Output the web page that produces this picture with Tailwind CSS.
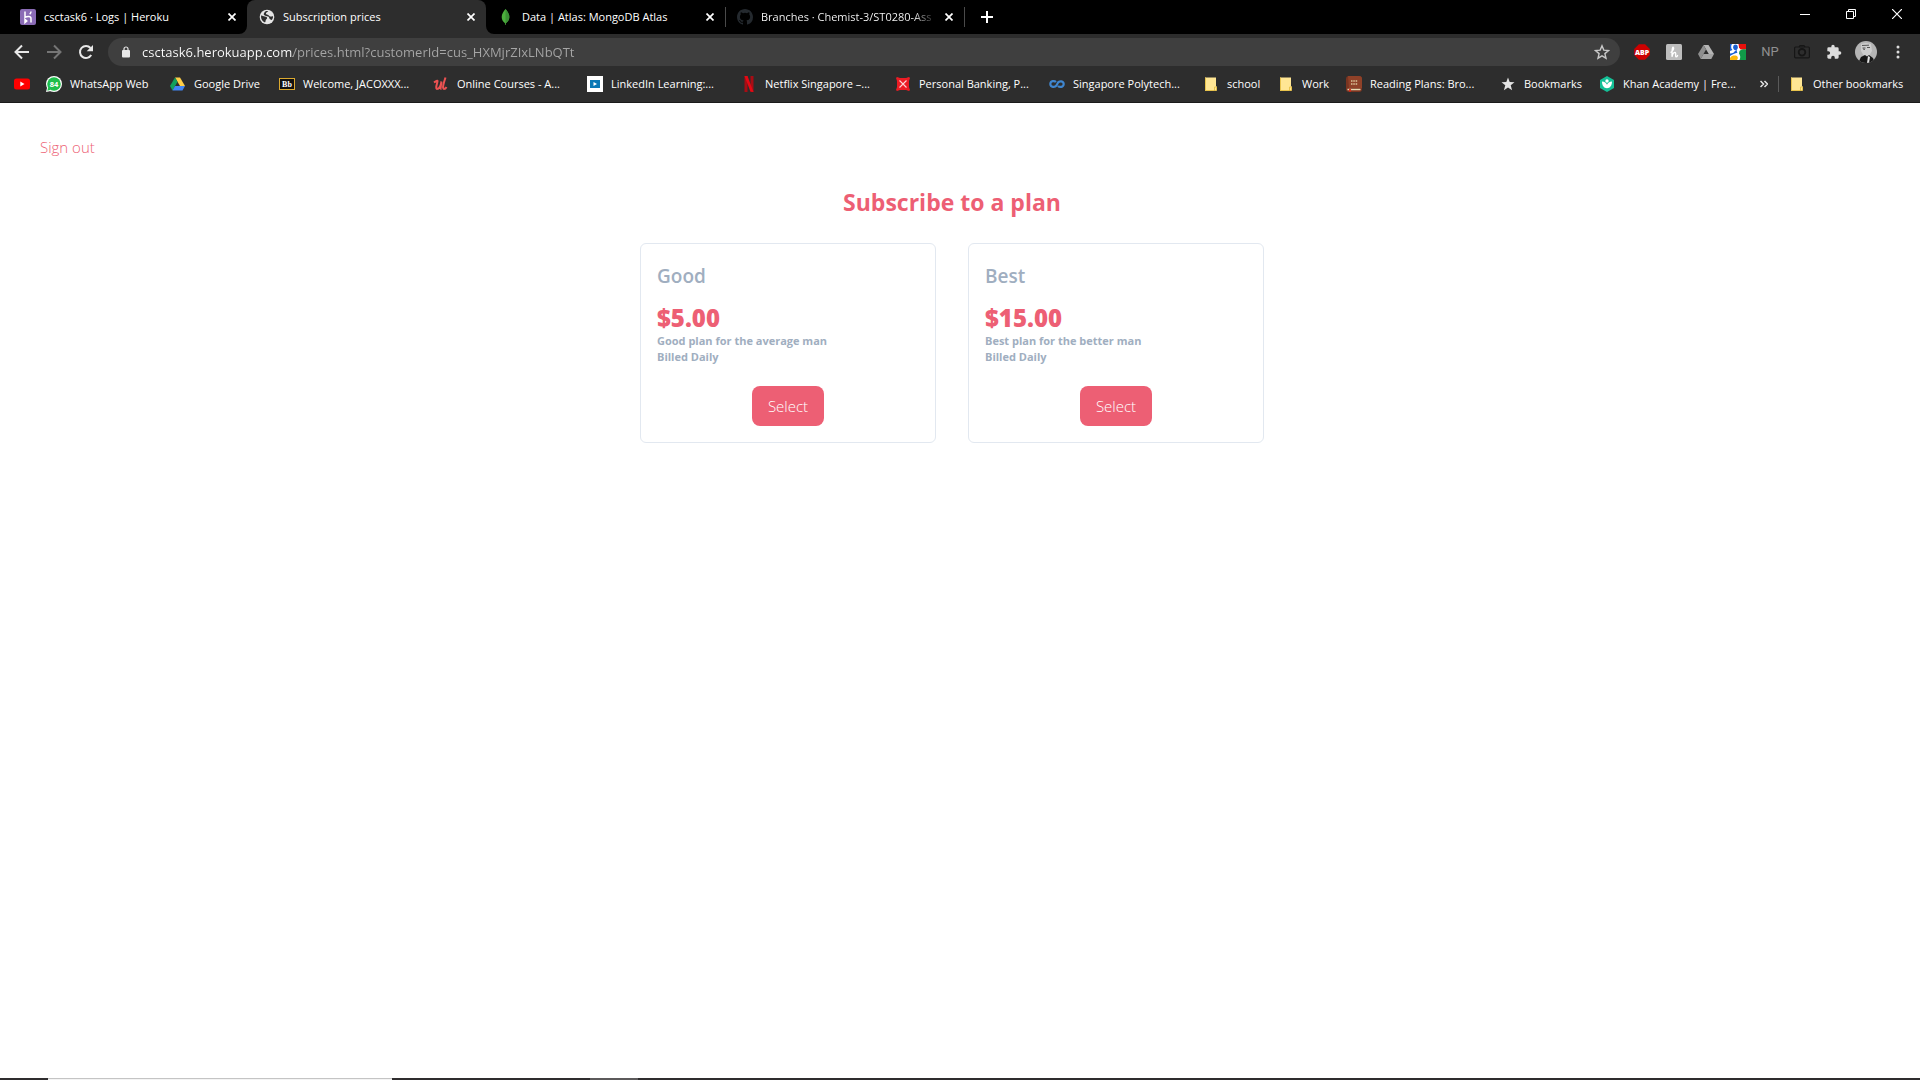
<!DOCTYPE html>
<html lang="en">
<head>
<meta charset="utf-8">
<title>Subscription prices</title>
<script src="https://cdn.jsdelivr.net/npm/@tailwindcss/browser@4"></script>
</head>
<body class="flex min-h-screen flex-col bg-white font-['Open_Sans','Noto_Sans',sans-serif]">

<header class="bg-[#2d2d2d] text-[11px] leading-4 text-white">
  <!-- Tab strip -->
  <div class="flex h-[34px] bg-black pl-2">
    <div class="flex w-[239px] items-center gap-2 px-3">
      <svg class="size-4 shrink-0" viewBox="0 0 16 16"><rect width="16" height="16" rx="2" fill="#8a6bb5"/><path d="M5 2.500v5.800c2-1 6-1.500 6 1.200v4M11 2.500c0 1-.5 2-1.300 2.700M5 10.500v3.200l1.800-1.600z" fill="none" stroke="#fff" stroke-width="1.500"/></svg>
      <span class="grow whitespace-nowrap">csctask6 · Logs | Heroku</span>
      <button aria-label="Close tab" class="-mr-[5px] size-4 p-1"><svg class="size-2" viewBox="0 0 8 8"><path d="M.5.5l7 7M7.500.5l-7 7" stroke="#fff" stroke-width="1.700"/></svg></button>
    </div>
    <div class="relative flex w-[239px] items-center gap-2 rounded-t-lg bg-[#2d2d2d] px-3">
      <svg class="absolute bottom-0 -left-2 size-2" viewBox="0 0 8 8"><path d="M8 0v8H0a8 8 0 0 0 8-8z" fill="#2d2d2d"/></svg>
      <svg class="absolute -right-2 bottom-0 size-2" viewBox="0 0 8 8"><path d="M0 0v8h8a8 8 0 0 1-8-8z" fill="#2d2d2d"/></svg>
      <svg class="size-4 shrink-0" viewBox="0 0 16 16"><circle cx="8" cy="8" r="7.300" fill="#e4e4e4"/><path d="M2 6.500c1.500-.2 2.300.9 3.800 1 1.300.1 2.500.5 2.300 1.800-.1.900-1.300 1-1.400 2-.1 1-.2 1.500-.7 2.200C3.500 12.500 1.700 10 2 6.500zM9.300 2c-.3 1-1.800 1-2.300 2-.3 1 .6 1.600 1.600 1.800 1 .2 1.400 1.400 2.400 1.600 1.200.3 1.800-.4 3-.2.100 1.300-.3 2.600-1.200 3.700-.9-.3-1.700-.2-2.200-1.200-.5-1-.5-1.900-1.500-2.200C7.600 7 6.500 7 5.500 6.300 4.700 5.700 4.600 5 5 4.200 5.500 3 6.300 2.500 7 2z" fill="#2d2d2d"/></svg>
      <span class="grow whitespace-nowrap">Subscription prices</span>
      <button aria-label="Close tab" class="-mr-[5px] size-4 p-1"><svg class="size-2" viewBox="0 0 8 8"><path d="M.5.5l7 7M7.500.5l-7 7" stroke="#fff" stroke-width="1.700"/></svg></button>
    </div>
    <div class="flex w-[239px] items-center gap-2 px-3">
      <svg class="size-4 shrink-0" viewBox="0 0 16 16"><path d="M7.500 0C9.500 2.500 11.300 4.500 11.300 8c0 3-1.600 4.700-3.400 6.200L7.700 16h-.5L7 14.200C5.200 12.700 3.700 11 3.700 8c0-3.500 1.900-5.500 3.800-8z" fill="#4caf3d"/><path d="M7.500 0c2 2.500 3.800 4.500 3.800 8 0 3-1.600 4.700-3.400 6.200L7.500 16z" fill="#3b8f35"/></svg>
      <span class="grow whitespace-nowrap">Data | Atlas: MongoDB Atlas</span>
      <button aria-label="Close tab" class="-mr-[5px] size-4 p-1"><svg class="size-2" viewBox="0 0 8 8"><path d="M.5.5l7 7M7.500.5l-7 7" stroke="#fff" stroke-width="1.700"/></svg></button>
    </div>
    <div class="my-[7px] w-px bg-[#4a4a4a]"></div>
    <div class="flex w-[238px] items-center gap-2 pr-3 pl-[11px]">
      <svg class="size-4 shrink-0" viewBox="0 0 16 16" fill="#24292e"><path fill-rule="evenodd" d="M8 0C3.580 0 0 3.580 0 8c0 3.540 2.290 6.530 5.470 7.590.4.070.55-.17.55-.38 0-.19-.01-.82-.01-1.490-2.010.37-2.530-.49-2.690-.94-.09-.23-.48-.94-.82-1.130-.28-.15-.68-.52-.01-.53.63-.01 1.080.58 1.230.82.72 1.210 1.870.87 2.330.66.07-.52.28-.87.51-1.070-1.780-.2-3.640-.89-3.640-3.950 0-.87.31-1.590.82-2.150-.08-.2-.36-1.020.08-2.120 0 0 .67-.21 2.200.82a7.600 7.600 0 0 1 4 0c1.530-1.040 2.200-.82 2.200-.82.44 1.100.16 1.920.08 2.120.51.56.82 1.270.82 2.150 0 3.070-1.870 3.750-3.650 3.950.29.25.54.73.54 1.480 0 1.070-.01 1.930-.01 2.200 0 .21.15.46.55.38A8 8 0 0 0 16 8c0-4.420-3.580-8-8-8z"/></svg>
      <span class="bg-[linear-gradient(90deg,#fff_88%,#333)] bg-clip-text whitespace-nowrap text-transparent">Branches · Chemist-3/ST0280-Ass</span>
      <button aria-label="Close tab" class="-mr-[5px] ml-auto size-4 p-1"><svg class="size-2" viewBox="0 0 8 8"><path d="M.5.5l7 7M7.500.5l-7 7" stroke="#fff" stroke-width="1.700"/></svg></button>
    </div>
    <div class="my-[7px] w-px bg-[#4a4a4a]"></div>
    <button aria-label="New tab" class="ml-2 w-7 px-2"><svg class="size-3" viewBox="0 0 12 12"><path d="M6 0v12M0 6h12" stroke="#fff" stroke-width="2"/></svg></button>
    <div class="ml-auto flex h-7">
      <button aria-label="Minimize" class="flex w-[46px] items-center justify-center"><svg class="size-[10px]" viewBox="0 0 10 10"><path d="M0 5.500h10" stroke="#fff"/></svg></button>
      <button aria-label="Restore" class="flex w-[46px] items-center justify-center"><svg class="size-[10px]" viewBox="0 0 10 10" fill="none" stroke="#fff"><path d="M.5 2.500h7v7h-7zM2.500 2.500v-2h7v7h-2"/></svg></button>
      <button aria-label="Close" class="flex w-[46px] items-center justify-center"><svg class="size-[10px]" viewBox="0 0 10 10"><path d="M0 0l10 10M10 0L0 10" stroke="#fff" stroke-width="1.200"/></svg></button>
    </div>
  </div>

  <!-- Toolbar -->
  <div class="flex h-9 items-center px-[6px]">
    <button aria-label="Back" class="flex w-8 justify-center"><svg class="size-4" viewBox="0 0 16 16" fill="none" stroke="#e8e8e8" stroke-width="2"><path d="M15 8H2M8 1.500L1.500 8 8 14.500"/></svg></button>
    <button aria-label="Forward" class="flex w-8 justify-center"><svg class="size-4" viewBox="0 0 16 16" fill="none" stroke="#757575" stroke-width="2"><path d="M1 8h13M8 1.500L14.500 8 8 14.500"/></svg></button>
    <button aria-label="Reload" class="flex w-8 justify-center"><svg class="size-4" viewBox="0 0 16 16"><path d="M13.200 11A6 6 0 1 1 12.500 4" fill="none" stroke="#e8e8e8" stroke-width="2"/><path d="M15 1v6.300H8.700z" fill="#e8e8e8"/></svg></button>
    <div class="ml-[6px] flex h-7 grow items-center rounded-full bg-[#3f3f3f] pr-[10px] pl-[14px]">
      <svg class="mr-[12px] h-3 w-2 shrink-0" viewBox="0 0 8 12"><rect y="4" width="8" height="7.500" rx="1" fill="#e8e8e8"/><path d="M2 4.500V3a2 2 0 0 1 4 0v1.500" fill="none" stroke="#e8e8e8" stroke-width="1.200"/></svg>
      <input aria-label="Address" type="text" value="csctask6.herokuapp.com/prices.html?customerId=cus_HXMjrZIxLNbQTt" class="h-7 grow bg-[linear-gradient(90deg,#fff_151px,#a6a6a6_151px)] bg-clip-text text-[13px] text-transparent outline-none">
      <button aria-label="Bookmark this page"><svg class="size-4" viewBox="0 0 16 16" fill="none" stroke="#c8c8c8" stroke-width="1.400"><path d="M8 1.800l1.800 4.300 4.700.4-3.600 3.100 1.100 4.600L8 11.800l-4 2.400 1.100-4.600L1.500 6.500l4.700-.4z"/></svg></button>
    </div>
    <div class="ml-[6px] flex items-center">
      <button aria-label="Adblock Plus" class="flex w-8 justify-center"><svg class="size-4" viewBox="0 0 16 16"><path d="M4.900.2h6.200l4.700 4.700v6.200l-4.700 4.700H4.900L.2 11.100V4.900z" fill="#c00"/><text x="8" y="10.700" text-anchor="middle" font-size="7" font-weight="800" fill="#fff">ABP</text></svg></button>
      <button aria-label="Honey" class="flex w-8 justify-center"><svg class="size-4" viewBox="0 0 16 16"><rect width="16" height="16" rx="1.500" fill="#bdbdbd"/><path d="M4.500 8.500C7 7.500 8.500 4 7.200 3.200 6 3 6 8 6 12.800c.5-2.500 1.500-4.500 3-4.500 1.800.2-.3 4.500 1.200 4.500.9 0 1.300-.9 1.500-1.800" fill="none" stroke="#fff" stroke-width="1.300"/></svg></button>
      <button aria-label="Drive" class="flex w-8 justify-center"><svg class="size-4" viewBox="0 0 16 16"><path d="M5.500 1h5L16 10h-5.200z" fill="#b5b5b5"/><path d="M5.500 1L8 5.500 2.700 15 0 10z" fill="#8e8e8e"/><path d="M5.500 10H16l-2.700 5H2.700z" fill="#a3a3a3"/></svg></button>
      <button aria-label="Google" class="flex w-8 justify-center"><svg class="size-4" viewBox="0 0 16 16"><path d="M0 0h16v16H0z" fill="#fff"/><path d="M8.500 0H16v5.500H10.500L9 3.500z" fill="#e8100c"/><path d="M9.500 7c1.500-1.500 4-2 6.500-1.500V16H9.500c1.500-3 .5-5-.5-6.500z" fill="#109a48"/><path d="M0 0h2C.8 1.500.8 4.500 2.500 6L0 7z" fill="#1a5fd0"/><ellipse cx="5.500" cy="3.300" rx="2.300" ry="2.800" fill="#1a5fd0"/><path d="M0 9.500C3 9.500 4.500 8 5 6.700L7 6c-.5 1.200 0 2 .5 2.800C5 9.500 2 10.500 0 12z" fill="#1a5fd0"/><path d="M0 14c1-2 3-2.500 5-2.500 3 0 3.500 2.500 2 4.500H0z" fill="#fbb90a"/></svg></button>
      <button class="w-8 text-center font-['Roboto',sans-serif] text-[13px] leading-4 text-[#909090]">NP</button>
      <button aria-label="Camera" class="flex w-8 justify-center"><svg class="size-4" viewBox="0 0 16 16" fill="none" stroke="#161616" stroke-width="1.200"><rect x=".6" y="3" width="14.800" height="10.800" rx="1"/><path d="M5 3l1-1.400h4L11 3" /><circle cx="8" cy="8.300" r="3.300" stroke-width="1.800"/></svg></button>
      <button aria-label="Extensions" class="flex w-8 justify-center"><svg class="size-4" viewBox="0 0 24 24" fill="#dcdcdc"><path d="M20.500 11H19V7a2 2 0 0 0-2-2h-4V3.500a2.500 2.500 0 0 0-5 0V5H4a2 2 0 0 0-2 2v3.800h1.500a2.700 2.700 0 0 1 0 5.400H2V20c0 1.100.9 2 2 2h3.800v-1.500a2.700 2.700 0 0 1 5.400 0V22H17a2 2 0 0 0 2-2v-4h1.500a2.500 2.500 0 0 0 0-5z"/></svg></button>
      <button aria-label="Profile" class="flex w-8 justify-center"><svg class="size-[22px]" viewBox="0 0 22 22"><defs><clipPath id="face"><circle cx="11" cy="11" r="11"/></clipPath></defs><g clip-path="url(#face)"><path d="M0 0h22v22H0z" fill="#b4b4b4"/><path d="M6 3l5-1 5 1 1 7-3 5H9l-3-5z" fill="#cdcdcd"/><path d="M7 4.500l7-.3M7.500 7h3M12 6.500h3M8 8l2 .5" stroke="#555"/><path d="M3 22l3-6 4-2 2 1.500 2-1.500 4 3 2 5z" fill="#171717"/><path d="M13 15l2 1-1 6h-2z" fill="#e2e2e2"/></g></svg></button>
      <button aria-label="Menu" class="flex w-8 justify-center"><svg class="size-4" viewBox="0 0 16 16" fill="#dcdcdc"><circle cx="8" cy="3" r="1.500"/><circle cx="8" cy="8" r="1.500"/><circle cx="8" cy="13" r="1.500"/></svg></button>
    </div>
  </div>

  <!-- Bookmarks bar -->
  <nav aria-label="Bookmarks" class="flex h-[33px] items-center gap-4 border-b border-[#1a1a1a] px-[14px] pb-1 whitespace-nowrap">
    <a href="#" aria-label="YouTube"><svg class="size-4" viewBox="0 0 16 16"><rect y="2.500" width="16" height="11" rx="2.500" fill="#f00"/><path d="M6.300 5.500v5L10.500 8z" fill="#fff"/></svg></a>
    <a href="#" class="flex w-[108px] items-center gap-2"><svg class="size-4" viewBox="0 0 16 16"><circle cx="8" cy="8" r="8" fill="#fff"/><path d="M0 16l1.300-5L5 15z" fill="#fff"/><circle cx="8" cy="8" r="6.800" fill="#1ebe4b"/><path d="M1.300 14.700l1-3.700 2.500 2.700z" fill="#1ebe4b"/><text x="8" y="10.700" text-anchor="middle" font-size="7.500" font-weight="700" fill="#fff">84</text></svg><span>WhatsApp Web</span></a>
    <a href="#" class="flex w-[93px] items-center gap-2"><svg class="size-4" viewBox="0 0 16 16"><path d="M5 1.500h5L15 10h-5z" fill="#ffcf48"/><path d="M5 1.500L7.500 5.800 2.500 14.500 0 10z" fill="#11a05c"/><path d="M5 10H15l-2.500 4.500h-10z" fill="#4285f4"/></svg><span>Google Drive</span></a>
    <a href="#" class="flex w-[138px] items-center gap-2"><svg class="size-4 shrink-0" viewBox="0 0 16 16"><rect x=".5" y="2.500" width="15" height="11" fill="#111" stroke="#dba92f"/><text x="8" y="11" text-anchor="middle" font-size="8" font-weight="700" font-family="Liberation Serif" fill="#fff">Bb</text></svg><span>Welcome, JACOXXX...</span></a>
    <a href="#" class="flex w-[138px] items-center gap-2"><svg class="size-4 shrink-0" viewBox="0 0 16 16" fill="none" stroke="#ec5252" stroke-width="2"><path d="M1 6.500C2.500 5.500 4.500 4 4.500 5 4.500 7 2 12.500 4 13c2.500 0 4-4.500 4.500-7.500C8 9 7 13 8.500 13M12.500 1.500C11 6 8.800 12.800 11 13c1.200 0 2-1 2.500-2"/></svg><span>Online Courses - A...</span></a>
    <a href="#" class="flex w-[138px] items-center gap-2"><svg class="size-4 shrink-0" viewBox="0 0 16 16"><path d="M0 0h16v16H0z" fill="#fff"/><path d="M3 4h10v8H3z" fill="#0a78b5"/><path d="M6.500 6v4L10 8z" fill="#fff"/></svg><span>LinkedIn Learning:...</span></a>
    <a href="#" class="flex w-[138px] items-center gap-2"><svg class="size-4 shrink-0" viewBox="0 0 16 16"><path d="M3.500 0h3v16l-3 .2zM9.500 0h3v16l-3-.5z" fill="#a80d14"/><path d="M3.500 0h3l6 16-3-.3z" fill="#e50914"/></svg><span>Netflix Singapore –...</span></a>
    <a href="#" class="flex w-[138px] items-center gap-2"><svg class="size-4 shrink-0" viewBox="0 0 16 16"><path d="M1 2l1-1 3 1h6l3-1 1 1-1 3v6l1 3-1 1-3-1H5l-3 1-1-1 1-3V5z" fill="#ec1c24"/><path d="M4.500 4.500l7 7M11.500 4.500l-7 7" stroke="#ffd5d5" stroke-width="1.100"/></svg><span>Personal Banking, P...</span></a>
    <a href="#" class="flex w-[138px] items-center gap-2"><svg class="size-4 shrink-0" viewBox="0 0 16 16" fill="none" stroke="#3f86cf" stroke-width="2.200"><path d="M7 6C5.500 4.500 1.500 4.500 1.300 8c.2 3.500 4.700 3.500 6.200 1.500L9 6.500c1.500-2 5.500-1.500 5.700 1.500-.2 3.500-4.200 3.500-5.700 2"/></svg><span>Singapore Polytech...</span></a>
    <a href="#" class="flex w-[59px] items-center gap-2"><svg class="size-4" viewBox="0 0 16 16"><path d="M2 1.500h11v9h1V14H2z" fill="#ffe694"/><path d="M2.500 1.500v12.500M2 14.500h9.500M11.500 11h2v3.500h-2z" stroke="#e8c34c" fill="#ffe694"/></svg><span>school</span></a>
    <a href="#" class="flex w-[52px] items-center gap-2"><svg class="size-4" viewBox="0 0 16 16"><path d="M2 1.500h11v9h1V14H2z" fill="#ffe694"/><path d="M2.500 1.500v12.500M2 14.500h9.500M11.500 11h2v3.500h-2z" stroke="#e8c34c" fill="#ffe694"/></svg><span>Work</span></a>
    <a href="#" class="flex w-[138px] items-center gap-2"><svg class="size-4 shrink-0" viewBox="0 0 16 16"><rect width="16" height="16" rx="3" fill="#7a3420"/><path d="M2 0h11a3 3 0 0 1 3 3v9H3z" fill="#8f4128"/><path d="M1.500 13.500h13" stroke="#e8d9b0" stroke-width="1.500"/><path d="M3 13h2v3l-1-1-1 1z" fill="#e02a1c"/><path d="M5 5h7M5 8h7" stroke="#dcc49a" stroke-width="1.500" stroke-dasharray="1.500 .8"/></svg><span>Reading Plans: Bro...</span></a>
    <a href="#" class="flex w-[83px] items-center gap-2"><svg class="size-4" viewBox="0 0 16 16" fill="#e4e4e4"><path d="M8 1.500l1.700 4.600 4.800.2-3.800 3 1.400 4.900L8 11.500l-4.100 2.700 1.400-4.900-3.800-3 4.800-.2z"/></svg><span>Bookmarks</span></a>
    <a href="#" class="flex w-[138px] items-center gap-2"><svg class="size-4 shrink-0" viewBox="0 0 16 16"><path d="M8 0l7 4v8l-7 4-7-4V4z" fill="#14bf96"/><circle cx="8" cy="5" r="1.700" fill="#fff"/><path d="M3 5.500c2.500 0 4.300 1.500 5 3.200.7-1.700 2.500-3.200 5-3.200 0 4-2 6.700-5 6.700S3 9.500 3 5.500z" fill="#fff"/></svg><span>Khan Academy | Fre...</span></a>
    <div class="ml-auto flex items-center gap-[10px]">
      <button aria-label="More bookmarks"><svg class="size-2" viewBox="0 0 8 8" fill="none" stroke="#e4e4e4" stroke-width="1.500"><path d="M.5 1l3 3-3 3M4.500 1l3 3-3 3"/></svg></button>
      <div class="h-4 w-px bg-[#5a5a5a]"></div>
      <a href="#" class="flex w-[117px] items-center gap-2"><svg class="size-4" viewBox="0 0 16 16"><path d="M2 1.500h11v9h1V14H2z" fill="#ffe694"/><path d="M2.500 1.500v12.500M2 14.500h9.500M11.500 11h2v3.500h-2z" stroke="#e8c34c" fill="#ffe694"/></svg><span>Other bookmarks</span></a>
    </div>
  </nav>
</header>

<main class="grow pr-4">
  <div class="px-10 pt-[31px]">
    <a href="#" class="inline-block text-[15px] leading-[26px] font-light text-[#ed5f74]">Sign out</a>
  </div>
  <h1 class="mt-6 text-center text-[23px] leading-9 font-bold text-[#ed5f74]">Subscribe to a plan</h1>
  <div class="mt-[23px] flex justify-center gap-8">
    <section class="flex w-[296px] flex-col rounded-md border border-[#e2e8f0] p-4 text-[#a0aec0]">
      <h2 class="text-[19px] leading-8 font-semibold">Good</h2>
      <p class="mt-[11px] text-2xl leading-[30px] font-extrabold text-[#ed5f74]">$5.00</p>
      <p class="text-[11px] leading-4 font-bold">Good plan for the average man</p>
      <p class="text-[11px] leading-4 font-bold">Billed Daily</p>
      <button class="mt-[21px] h-10 w-[72px] self-center rounded-lg bg-[#ed5f74] text-[15px] font-light text-white">Select</button>
    </section>
    <section class="flex w-[296px] flex-col rounded-md border border-[#e2e8f0] p-4 text-[#a0aec0]">
      <h2 class="text-[19px] leading-8 font-semibold">Best</h2>
      <p class="mt-[11px] text-2xl leading-[30px] font-extrabold text-[#ed5f74]">$15.00</p>
      <p class="text-[11px] leading-4 font-bold">Best plan for the better man</p>
      <p class="text-[11px] leading-4 font-bold">Billed Daily</p>
      <button class="mt-[21px] h-10 w-[72px] self-center rounded-lg bg-[#ed5f74] text-[15px] font-light text-white">Select</button>
    </section>
  </div>
</main>

<!-- Sliver of the hidden taskbar -->
<footer class="flex h-[2px] bg-[#2f2d2e]">
  <div class="ml-12 w-[344px] border-t border-[#c4c4c4] bg-[#f4f4f4]"></div>
  <div class="ml-[198px] w-12 bg-[#5c5a5b]"></div>
</footer>
</body>
</html>
